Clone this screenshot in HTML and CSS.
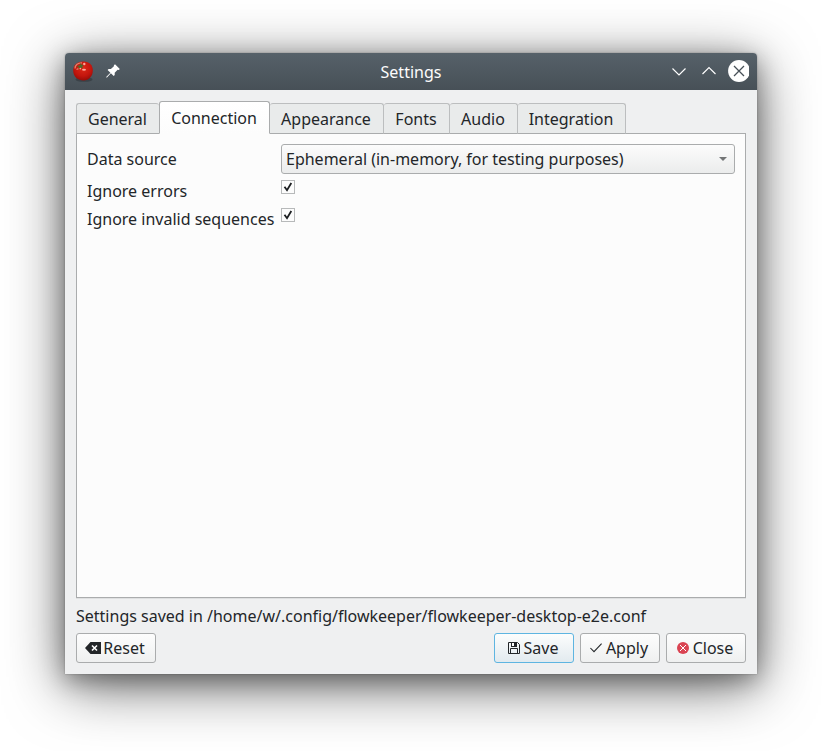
FILE: index.html
```html
<!DOCTYPE html>
<html lang="en">
<head>
<meta charset="utf-8">
<title>Settings</title>
<link rel="stylesheet" href="styles.css">
</head>
<body>
<main class="window">
  <header class="titlebar">
    <div class="title-left">
      <svg width="22" height="22" viewBox="0 0 22 22">
        <defs><radialGradient id="skin" cx=".5" cy=".35" r=".65"><stop offset="0" stop-color="#dc2a18"/><stop offset=".65" stop-color="#c3150d"/><stop offset="1" stop-color="#970d08"/></radialGradient></defs>
        <ellipse cx="12" cy="19.500" rx="8.500" ry="2.300" fill="#30363a" opacity=".6"/>
        <path d="M11 1.500C17 1.200 20.800 5 20.800 10.500S17 20.500 11.500 20.500 1.200 17 1.200 10.500C1.200 5 5 1.800 11 1.500z" fill="url(#skin)"/>
        <path d="M3 8.500C3 5 6 2.700 10 2.800M4.500 9.500l2-.8" fill="none" stroke="#ee9b84" stroke-width="1.300" opacity=".8"/>
        <path d="M4.500 6.200L8 5.200l.8-2.500.8 2.300 2.700-.4-2.200 1.600.8 2.200-2.200-.9-2 1.800.2-2.300z" fill="#496b2d"/>
        <ellipse cx="12" cy="9.800" rx="2" ry="1" fill="#ffa69b"/><circle cx="12.300" cy="4" r="1.200" fill="#ffa69b"/><circle cx="8.300" cy="8.600" r=".8" fill="#f6b09b"/>
      </svg>
      <svg class="pin" width="14" height="14" viewBox="0 0 14 14"><path d="M9 .2L13.800 5 12.800 6 11.600 5.800 8.700 8.700 8.700 11 7.700 12 4.900 9.200 1 13.400.2 13.600.4 12.800 4.400 8.700 1.600 5.900 2.600 4.900 4.900 5 7.900 2.200 7.900 1.300z" fill="#fff"/></svg>
    </div>
    <h1 class="title">Settings</h1>
    <div class="title-right">
      <svg width="80" height="24" viewBox="0 0 80 24" fill="none" stroke="#fff" stroke-width="1.150">
        <path d="M3.500 9.500L10 16 16.500 9.500M33.500 15L40 8.500 46.500 15"/>
        <circle cx="70" cy="12" r="10.900" fill="#fff" stroke="none"/>
        <path d="M65 7l10 10M75 7L65 17" stroke="#475057" stroke-width="1.300"/>
      </svg>
    </div>
  </header>
  <section class="content">
    <nav class="tabs">
      <div class="tab general">General</div>
      <div class="tab active">Connection</div>
      <div class="tab appearance">Appearance</div>
      <div class="tab fonts">Fonts</div>
      <div class="tab audio">Audio</div>
      <div class="tab integration">Integration</div>
    </nav>
    <div class="pane">
      <div class="label">Data source</div>
      <div class="combo"><span>Ephemeral (in-memory, for testing purposes)</span><svg width="8" height="4" viewBox="0 0 8 4"><path d="M0 0h8L4 4z" fill="#737576"/></svg></div>
      <div class="label">Ignore errors</div>
      <div class="check"><svg width="12" height="12" viewBox="0 0 12 12"><path d="M2.500 5.800L5 9.200 9.300 2" fill="none" stroke="#1b1e20" stroke-width="1.800"/></svg></div>
      <div class="label">Ignore invalid sequences</div>
      <div class="check"><svg width="12" height="12" viewBox="0 0 12 12"><path d="M2.500 5.800L5 9.200 9.300 2" fill="none" stroke="#1b1e20" stroke-width="1.800"/></svg></div>
    </div>
    <p class="status">Settings saved in /home/w/.config/flowkeeper/flowkeeper-desktop-e2e.conf</p>
    <footer class="buttons">
      <div class="button reset"><svg width="16" height="12" viewBox="0 0 16 12"><path d="M0 6L5.500 0H16V12H5.500z" fill="#232629"/><path d="M7 3.500l5 5M12 3.500l-5 5" stroke="#fff" stroke-width="1.600"/></svg><span>Reset</span></div>
      <div class="button save"><svg width="12" height="12" viewBox="0 0 12 12" fill="none" stroke="#232629"><path d="M.5.500H9.500L11.500 2.500V11.500H.5z M2.500 11.500V6.500H9.500V11.500"/><path d="M3 0h6v5H3z" fill="#232629" stroke="none"/><path d="M4 1h2v3H4z" fill="#fff" stroke="none"/></svg><span>Save</span></div>
      <div class="button apply"><svg width="12" height="10" viewBox="0 0 12 10"><path d="M.4 5L4 8.700 11.600.7" fill="none" stroke="#232629" stroke-width="1.050"/></svg><span>Apply</span></div>
      <div class="button close"><svg width="12" height="12" viewBox="0 0 12 12"><circle cx="6" cy="6" r="6" fill="#da4453"/><path d="M3 3l6 6M9 3L3 9" stroke="#fff" stroke-width="1"/></svg><span>Close</span></div>
    </footer>
  </section>
</main>
</body>
</html>
```
FILE: styles.css
```css
* { box-sizing: border-box; }
body {
  margin: 0;
  height: 751px;
  padding: 53px 65px 0;
  overflow: hidden;
  background: #fff;
  color: #232629;
  font: 16px/22px "Noto Sans", sans-serif;
  white-space: nowrap;
}
.window {
  width: 692px;
  height: 621px;
  border-radius: 4px 4px 0 0;
  background: #eff0f1;
  box-shadow: 0 12px 58px rgba(0, 0, 0, .58), 0 6px 24px rgba(0, 0, 0, .35), 0 0 2px rgba(0, 0, 0, .3);
}
.titlebar {
  display: grid;
  grid-template-columns: 1fr auto 1fr;
  align-items: center;
  height: 37px;
  padding: 0 7px 1px;
  border-radius: 4px 4px 0 0;
  background: linear-gradient(#566169, #475057);
  color: #fcfcfc;
}
.title-left { display: flex; align-items: center; gap: 12px; }
.title { margin: 1px 0 0; font-size: 16px; font-weight: 400; }
.title-right { display: flex; justify-content: flex-end; margin-right: 1px; }
.title-right svg { display: block; }
.content {
  display: flex;
  flex-direction: column;
  height: 584px;
  padding: 11px;
}
.tabs { display: flex; align-items: flex-end; height: 33px; margin-bottom: -1px; position: relative; }
.tab {
  height: 31px;
  padding: 4px 1px 0 0;
  border: 1px solid #bcbebf;
  border-bottom-color: #aaacad;
  border-left-width: 0;
  border-radius: 3px 3px 0 0;
  background: #e9ebeb;
  text-align: center;
}
.general { width: 83px; border-left-width: 1px; border-right-width: 0; }
.active {
  width: 111px;
  height: 33px;
  padding-top: 5px;
  border: 1px solid #aaacad;
  border-bottom-color: #fcfcfc;
  background: linear-gradient(#fff, #fcfcfc);
}
.appearance { width: 114px; }
.fonts { width: 66px; }
.audio { width: 68px; }
.integration { width: 108px; }
.pane {
  display: grid;
  grid-template-columns: 194px 454px;
  grid-template-rows: 30px 28px 28px;
  height: 465px;
  padding: 10px;
  border: 1px solid #aaacad;
  background: #fcfcfc;
  box-shadow: 0 1px 0 #dfe0e1;
}
.label { padding-top: 4px; }
.label:nth-child(n+3) { padding-top: 6px; }
.combo {
  display: flex;
  align-items: center;
  justify-content: space-between;
  padding: 0 7px 0 4px;
  border: 1px solid #aaacad;
  border-radius: 3px;
  background: linear-gradient(#fcfcfc, #ebecec);
}
.check {
  width: 14px;
  height: 14px;
  margin-top: 6px;
  border: 1px solid #b7b9ba;
  background: #fcfcfc;
}
.check svg { display: block; }
.status { margin: 7px 0 6px; line-height: 22px; }
.buttons { display: flex; gap: 6px; }
.button {
  display: flex;
  align-items: center;
  justify-content: center;
  gap: 4px;
  width: 80px;
  height: 30px;
  padding-right: 2px;
  border: 1px solid #aaacad;
  border-radius: 3px;
  background: linear-gradient(#fdfdfd, #eff0f0);
}
.reset { gap: 2px; margin-right: auto; }
.save { border-color: #5eb5e1; background: linear-gradient(#fcfdfd, #e2eaef); }
```
